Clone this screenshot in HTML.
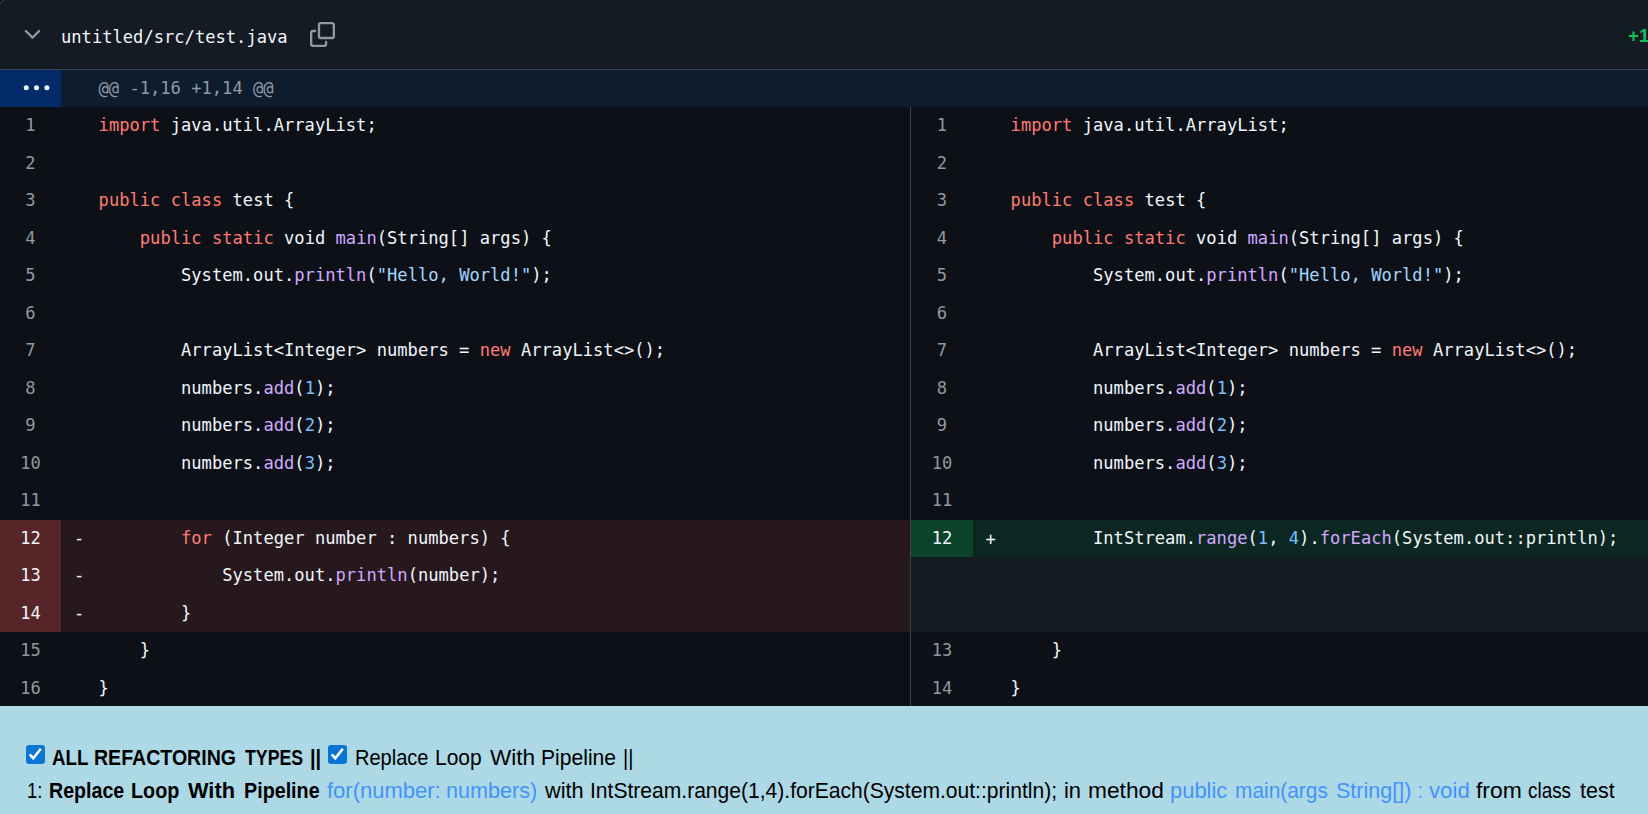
<!DOCTYPE html>
<html lang="en"><head><meta charset="utf-8"><title>untitled/src/test.java</title>
<style>
*{box-sizing:border-box;margin:0;padding:0}
html,body{width:1648px;height:814px;overflow:hidden;background:#0d1117}
body{position:relative;font-family:"DejaVu Sans Mono", "Liberation Mono", monospace;font-size:17.13px;color:#f0f6fc}
.hdr{position:absolute;left:0;top:0;width:1700px;height:70px;background:#151b23;border-bottom:1px solid #3d444d}
.hdr .fn{position:absolute;left:61px;top:19px;line-height:37.5px;white-space:pre;color:#f0f6fc}
.hdr svg{position:absolute}
.plus{position:absolute;left:1628px;top:22px;font-family:"Liberation Sans", sans-serif;font-weight:bold;font-size:18.75px;color:#16be5a;white-space:pre;line-height:28px}
.hunk{position:absolute;left:0;top:70px;width:1700px;height:37px;background:#0e1d2e}
.hunk .btn{position:absolute;left:0;top:0;width:61px;height:37px;background:#042b69}
.hunk .txt{position:absolute;left:98.5px;top:0;line-height:37px;color:#9198a1;white-space:pre}
.side{position:absolute;top:107px;height:600.0px;background:#0d1117}
.side.l{left:0;width:911px;border-right:1px solid #3d444d}
.side.r{left:911px;width:760px}
.side.r .num{width:62px}
.side.r .mk{left:74.6px;top:1px}
.side.r .code{left:99.6px}
.row{position:relative;height:37.5px;line-height:37.5px;white-space:pre}
.row .num{position:absolute;left:0;top:0;width:61px;height:100%;text-align:center;color:#9198a1}
.row .mk{position:absolute;left:74px;top:0}
.row .code{position:absolute;left:98.6px;top:0}
.row.del{background:#27181d}
.row.del .num{background:#552527;color:#f0f6fc}
.row.add{background:#0c2721}
.row.add .num{background:#0e432b;color:#f0f6fc}
.row.empty{background:#151b23}
.k{color:#ff7b72} .f{color:#d2a8ff} .c{color:#79c0ff} .s{color:#a5d6ff}
.panel{position:absolute;left:0;top:706px;width:1648px;height:108px;background:#add8e6;color:#000;font-family:"Liberation Sans", sans-serif;font-size:21.4px}
.panel span,.panel b{position:absolute;white-space:pre;line-height:33px;transform-origin:0 0}
.panel .lnk{color:#4493f8}
.cb{position:absolute;width:19px;height:19px;border-radius:3px;background:#0a75d3}
</style></head>
<body>

<div class="hdr"><svg style="left:0;top:0" width="9" height="9" viewBox="0 0 9 9"><rect width="9" height="9" fill="#0d1117"/><circle cx="7.9" cy="7.9" r="8.9" fill="#151b23" stroke="#3d444d" stroke-width="1"/></svg><svg style="left:20px;top:22px" width="25" height="25" viewBox="0 0 16 16"><path fill="#9198a1" d="M12.78 5.22a.749.749 0 0 1 0 1.06l-4.25 4.25a.749.749 0 0 1-1.06 0L3.22 6.28a.749.749 0 1 1 1.06-1.06L8 8.939l3.72-3.719a.749.749 0 0 1 1.06 0Z"/></svg><span class="fn">untitled/src/test.java</span><svg style="left:310px;top:22px" width="25" height="25" viewBox="0 0 16 16"><path fill="#9198a1" d="M0 6.75C0 5.784.784 5 1.75 5h1.5a.75.75 0 0 1 0 1.5h-1.5a.25.25 0 0 0-.25.25v7.5c0 .138.112.25.25.25h7.5a.25.25 0 0 0 .25-.25v-1.5a.75.75 0 0 1 1.5 0v1.5A1.75 1.75 0 0 1 9.25 16h-7.5A1.75 1.75 0 0 1 0 14.25Z"/><path fill="#9198a1" d="M5 1.75C5 .784 5.784 0 6.75 0h7.5C15.216 0 16 .784 16 1.75v7.5A1.75 1.75 0 0 1 14.25 11h-7.5A1.75 1.75 0 0 1 5 9.25Zm1.75-.25a.25.25 0 0 0-.25.25v7.5c0 .138.112.25.25.25h7.5a.25.25 0 0 0 .25-.25v-7.5a.25.25 0 0 0-.25-.25Z"/></svg></div>
<div class="plus">+1</div>
<div class="hunk"><div class="btn"><svg style="position:absolute;left:20px;top:12px" width="36" height="12" viewBox="0 0 36 12"><circle cx="6.25" cy="5.75" r="2.5" fill="#f0f6fc"/><circle cx="16.5" cy="5.75" r="2.5" fill="#f0f6fc"/><circle cx="26.9" cy="5.75" r="2.5" fill="#f0f6fc"/></svg></div><span class="txt">@@ -1,16 +1,14 @@</span></div>
<div class="side l">
<div class="row "><span class="num">1</span><span class="mk"></span><span class="code"><span class="k">import</span> java.util.ArrayList;</span></div>
<div class="row "><span class="num">2</span><span class="mk"></span><span class="code"></span></div>
<div class="row "><span class="num">3</span><span class="mk"></span><span class="code"><span class="k">public</span> <span class="k">class</span> test {</span></div>
<div class="row "><span class="num">4</span><span class="mk"></span><span class="code">    <span class="k">public</span> <span class="k">static</span> void <span class="f">main</span>(String[] args) {</span></div>
<div class="row "><span class="num">5</span><span class="mk"></span><span class="code">        System.out.<span class="f">println</span>(<span class="s">"Hello, World!"</span>);</span></div>
<div class="row "><span class="num">6</span><span class="mk"></span><span class="code"></span></div>
<div class="row "><span class="num">7</span><span class="mk"></span><span class="code">        ArrayList&lt;Integer&gt; numbers = <span class="k">new</span> ArrayList&lt;&gt;();</span></div>
<div class="row "><span class="num">8</span><span class="mk"></span><span class="code">        numbers.<span class="f">add</span>(<span class="c">1</span>);</span></div>
<div class="row "><span class="num">9</span><span class="mk"></span><span class="code">        numbers.<span class="f">add</span>(<span class="c">2</span>);</span></div>
<div class="row "><span class="num">10</span><span class="mk"></span><span class="code">        numbers.<span class="f">add</span>(<span class="c">3</span>);</span></div>
<div class="row "><span class="num">11</span><span class="mk"></span><span class="code"></span></div>
<div class="row del"><span class="num">12</span><span class="mk">-</span><span class="code">        <span class="k">for</span> (Integer number : numbers) {</span></div>
<div class="row del"><span class="num">13</span><span class="mk">-</span><span class="code">            System.out.<span class="f">println</span>(number);</span></div>
<div class="row del"><span class="num">14</span><span class="mk">-</span><span class="code">        }</span></div>
<div class="row "><span class="num">15</span><span class="mk"></span><span class="code">    }</span></div>
<div class="row "><span class="num">16</span><span class="mk"></span><span class="code">}</span></div>
</div>
<div class="side r">
<div class="row "><span class="num">1</span><span class="mk"></span><span class="code"><span class="k">import</span> java.util.ArrayList;</span></div>
<div class="row "><span class="num">2</span><span class="mk"></span><span class="code"></span></div>
<div class="row "><span class="num">3</span><span class="mk"></span><span class="code"><span class="k">public</span> <span class="k">class</span> test {</span></div>
<div class="row "><span class="num">4</span><span class="mk"></span><span class="code">    <span class="k">public</span> <span class="k">static</span> void <span class="f">main</span>(String[] args) {</span></div>
<div class="row "><span class="num">5</span><span class="mk"></span><span class="code">        System.out.<span class="f">println</span>(<span class="s">"Hello, World!"</span>);</span></div>
<div class="row "><span class="num">6</span><span class="mk"></span><span class="code"></span></div>
<div class="row "><span class="num">7</span><span class="mk"></span><span class="code">        ArrayList&lt;Integer&gt; numbers = <span class="k">new</span> ArrayList&lt;&gt;();</span></div>
<div class="row "><span class="num">8</span><span class="mk"></span><span class="code">        numbers.<span class="f">add</span>(<span class="c">1</span>);</span></div>
<div class="row "><span class="num">9</span><span class="mk"></span><span class="code">        numbers.<span class="f">add</span>(<span class="c">2</span>);</span></div>
<div class="row "><span class="num">10</span><span class="mk"></span><span class="code">        numbers.<span class="f">add</span>(<span class="c">3</span>);</span></div>
<div class="row "><span class="num">11</span><span class="mk"></span><span class="code"></span></div>
<div class="row add"><span class="num">12</span><span class="mk">+</span><span class="code">        IntStream.<span class="f">range</span>(<span class="c">1</span>, <span class="c">4</span>).<span class="f">forEach</span>(System.out::println);</span></div>
<div class="row empty"><span class="num"></span><span class="mk"></span><span class="code"></span></div>
<div class="row empty"><span class="num"></span><span class="mk"></span><span class="code"></span></div>
<div class="row "><span class="num">13</span><span class="mk"></span><span class="code">    }</span></div>
<div class="row "><span class="num">14</span><span class="mk"></span><span class="code">}</span></div>
</div>
<div class="panel">
<div class="cb" style="left:26px;top:39px"><svg width="19" height="19" viewBox="0 0 19 19" style="position:absolute;left:0;top:0"><path d="M3.7 9.4 L7.3 13.2 L14.8 3.7" fill="none" stroke="#fff" stroke-width="2.6" stroke-linecap="butt" stroke-linejoin="miter"/></svg></div>
<b style="left:52.25px;top:35px;font-size:22.2px;transform:scaleX(0.842)">ALL </b><b style="left:94.12px;top:35px;font-size:22.2px;transform:scaleX(0.8815)">REFACTORING </b><b style="left:245.0px;top:35px;font-size:22.2px;transform:scaleX(0.7992)">TYPES </b><b style="left:309.7px;top:35px;font-size:22.2px;transform:scaleX(0.8964)">|| </b>
<div class="cb" style="left:328px;top:39px"><svg width="19" height="19" viewBox="0 0 19 19" style="position:absolute;left:0;top:0"><path d="M3.7 9.4 L7.3 13.2 L14.8 3.7" fill="none" stroke="#fff" stroke-width="2.6" stroke-linecap="butt" stroke-linejoin="miter"/></svg></div>
<span style="left:354.67px;top:35px;font-size:21.6px;transform:scaleX(0.9269)">Replace </span><span style="left:435.13px;top:35px;font-size:21.6px;transform:scaleX(0.9718)">Loop </span><span style="left:489.8px;top:35px;font-size:21.6px;transform:scaleX(1.0456)">With </span><span style="left:541.32px;top:35px;font-size:21.6px;transform:scaleX(0.9773)">Pipeline </span><span style="left:623.47px;top:35px;font-size:21.6px;transform:scaleX(0.9292)">||</span>
<br>
<span style="left:26.89px;top:68px;font-size:21.6px;transform:scaleX(0.8589)">1: </span><b style="left:48.85px;top:68px;font-size:21.8px;transform:scaleX(0.9002)">Replace </b><b style="left:131.34px;top:68px;font-size:21.8px;transform:scaleX(0.9077)">Loop </b><b style="left:188.1px;top:68px;font-size:21.8px;transform:scaleX(0.999)">With </b><b style="left:243.5px;top:68px;font-size:21.8px;transform:scaleX(0.9047)">Pipeline </b><span class="lnk" style="left:327.0px;top:68px;font-size:21.6px;transform:scaleX(1.0189)">for(number: </span><span class="lnk" style="left:446.2px;top:68px;font-size:21.6px;transform:scaleX(1.001)">numbers) </span><span style="left:544.71px;top:68px;font-size:21.6px;transform:scaleX(1.008)">with </span><span style="left:590.15px;top:68px;font-size:21.6px;transform:scaleX(0.9753)">IntStream.range(1,4).forEach(System.out::println); </span><span style="left:1064.29px;top:68px;font-size:21.6px;transform:scaleX(1.0137)">in </span><span style="left:1087.65px;top:68px;font-size:21.6px;transform:scaleX(1.0526)">method </span><span class="lnk" style="left:1169.58px;top:68px;font-size:21.6px;transform:scaleX(1.0158)">public </span><span class="lnk" style="left:1234.73px;top:68px;font-size:21.6px;transform:scaleX(0.9674)">main(args </span><span class="lnk" style="left:1336.2px;top:68px;font-size:21.6px;transform:scaleX(0.9959)">String[]) </span><span class="lnk" style="left:1417.55px;top:68px;font-size:21.6px;transform:scaleX(0.75)">: </span><span class="lnk" style="left:1428.7px;top:68px;font-size:21.6px;transform:scaleX(1.0284)">void </span><span style="left:1476.0px;top:68px;font-size:21.6px;transform:scaleX(1.0616)">from </span><span style="left:1528.3px;top:68px;font-size:21.6px;transform:scaleX(0.8745)">class </span><span style="left:1579.5px;top:68px;font-size:21.6px;transform:scaleX(0.997)">test</span>
</div>
</body></html>
